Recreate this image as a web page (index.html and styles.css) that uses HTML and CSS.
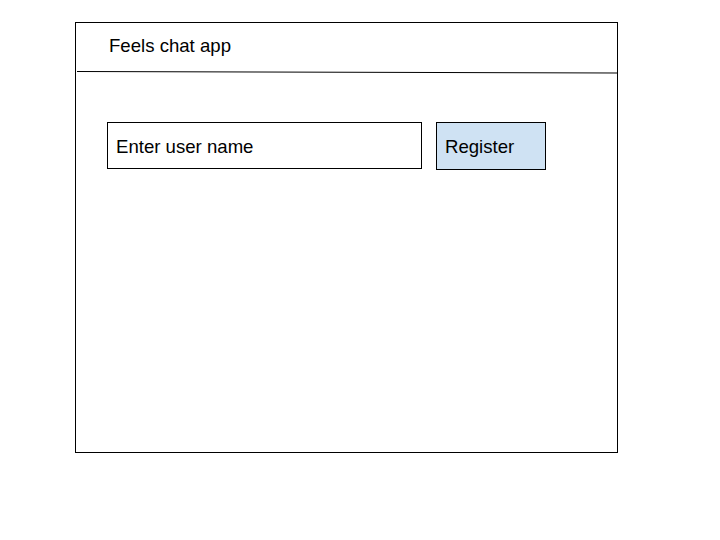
FILE: index.html
```html
<!DOCTYPE html>
<html>
<head>
<meta charset="utf-8">
<link rel="stylesheet" href="styles.css">
</head>
<body>
<div class="frame">
  <div class="header">Feels chat app</div>
  <svg class="rule" width="541" height="4" viewBox="0 0 541 4"><line x1="1" y1="1.5" x2="541" y2="3" stroke="#000" stroke-width="1"/></svg>
  <div class="row">
    <div class="field">Enter user name</div>
    <div class="btn">Register</div>
  </div>
</div>
</body>
</html>
```
FILE: styles.css
```css
html, body { margin: 0; padding: 0; background: #fff; }
body { font-family: "Liberation Sans", Arial, sans-serif; font-size: 18.6px; color: #000; }
.frame {
  margin: 22px 0 0 75px;
  width: 541px;
  height: 429px;
  border: 1px solid #000;
  box-sizing: content-box;
}
.header {
  height: 47px;
  line-height: 21px;
  padding: 12px 0 0 33px;
  box-sizing: border-box;
}
.rule { display: block; height: 4px; margin-left: 0; }
.row {
  display: flex;
  align-items: flex-start;
  gap: 14px;
  margin: 48px 0 0 31px;
}
.field {
  width: 315px;
  height: 47px;
  border: 1px solid #000;
  box-sizing: border-box;
  padding: 2px 0 0 8px;
  line-height: 43px;
}
.btn {
  width: 110px;
  height: 48px;
  border: 1px solid #000;
  box-sizing: border-box;
  background: #cfe2f3;
  padding: 1px 0 0 8px;
  line-height: 45px;
}
```
